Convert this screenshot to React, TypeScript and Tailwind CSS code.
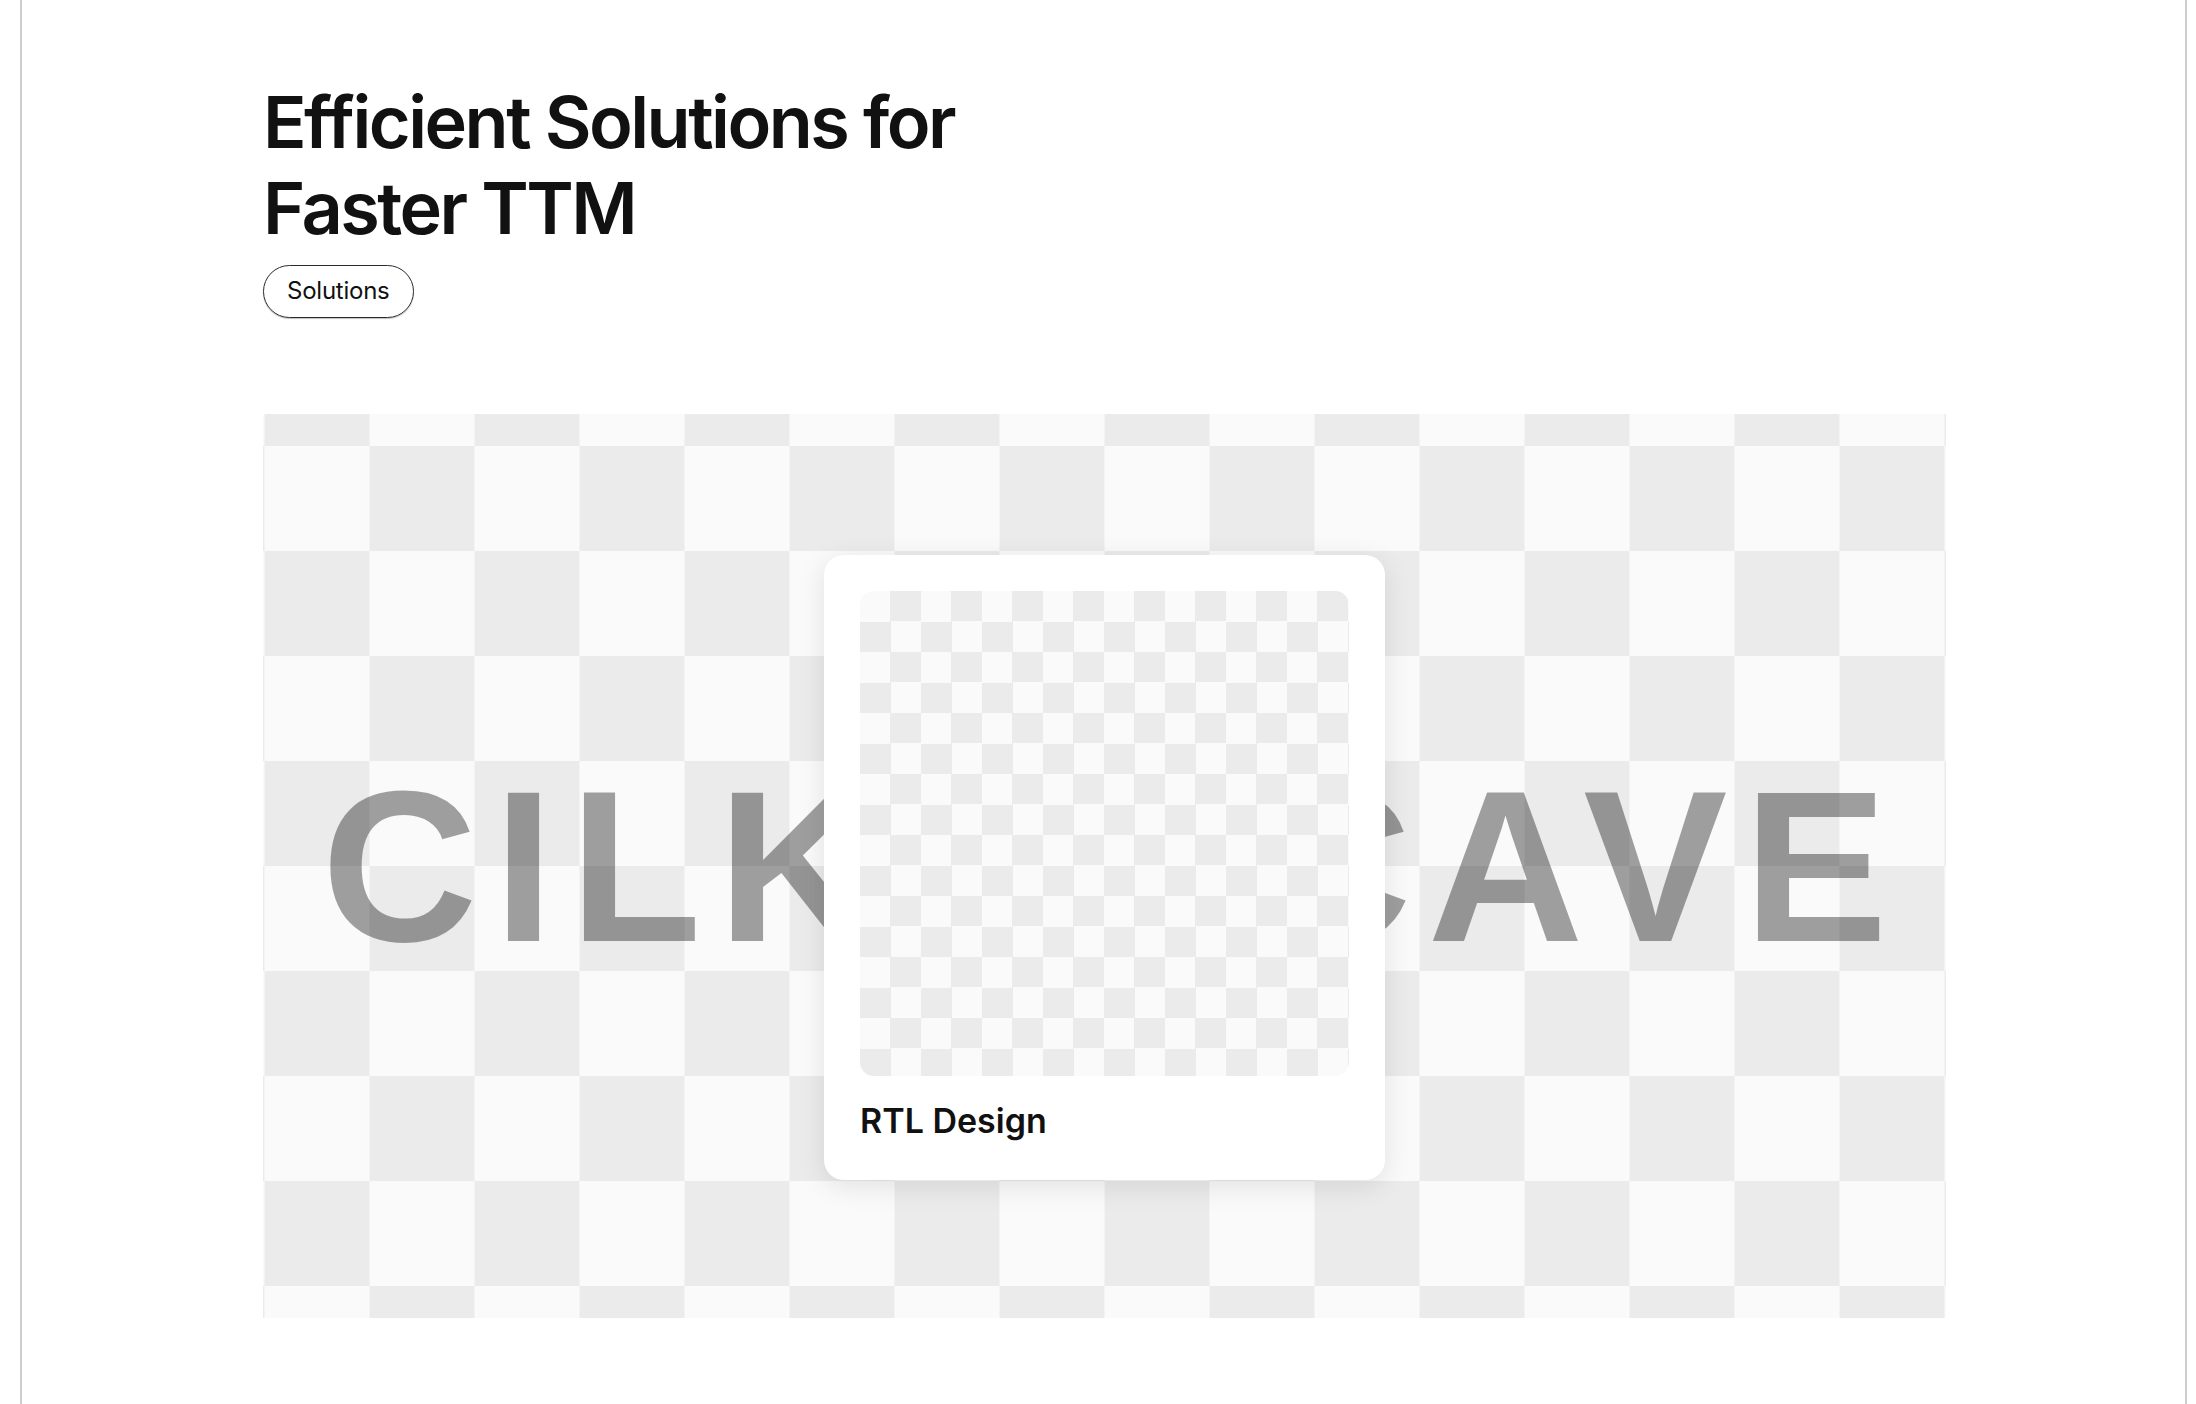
import React from "react";

export default function App() {
  return (
    <div className="min-h-screen bg-white font-['Inter',sans-serif]">
      <div className="ml-[20px] mr-[9px] min-h-[1404px] border-x-2 border-[#cdcdcd] pl-[241px] pt-[79px]">
        <h1 className="text-[72px] font-semibold leading-[1.2] tracking-[-0.035em] text-[#111111]">
          Efficient Solutions for
          <br />
          Faster TTM
        </h1>
        <div className="mt-[13px]">
          <span className="inline-flex h-[53px] items-center rounded-full border border-[#2b2b2b] px-[23px] text-[24px] tracking-[-0.01em] text-[#111111] shadow-[0_1px_1px_rgba(0,0,0,0.25)]">
            Solutions
          </span>
        </div>
        <div className="mt-[96px] grid h-[904px] w-[1683px] place-items-center overflow-hidden bg-[conic-gradient(#ebebeb_25%,#fafafa_0_50%,#ebebeb_0_75%,#fafafa_0)] bg-[length:210px_210px] bg-center">
          <div className="col-start-1 row-start-1 flex items-center gap-[366px] font-['Liberation_Sans',Arial,sans-serif] text-[216px] font-bold leading-none tracking-[16px] text-[rgba(0,0,0,0.37)] select-none">
            <span>CILK</span>
            <span className="-mr-[16px]">CAVE</span>
          </div>
          <div className="col-start-1 row-start-1 mt-[3px] w-[561px] rounded-[20px] bg-white px-[36px] pt-[36px] pb-[39px] shadow-[0_6px_28px_rgba(0,0,0,0.10)]">
            <div className="h-[485px] w-full rounded-[14px] bg-[conic-gradient(#ebebeb_25%,#fafafa_0_50%,#ebebeb_0_75%,#fafafa_0)] bg-[length:61px_61px] bg-[position:0_0]" />
            <div className="mt-[25px] text-[34px] font-semibold leading-[40px] text-[#111111]">
              RTL Design
            </div>
          </div>
        </div>
      </div>
    </div>
  );
}
